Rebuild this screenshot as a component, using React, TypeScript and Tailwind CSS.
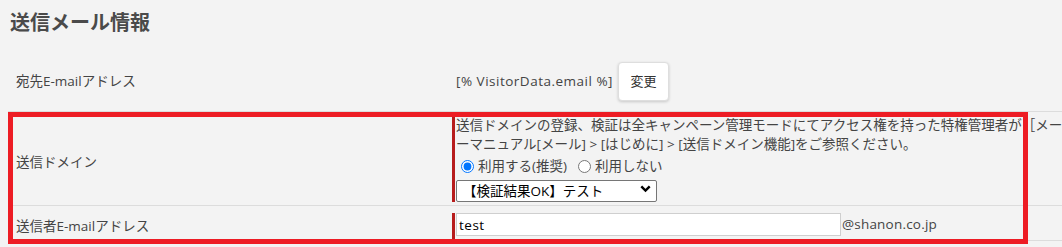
const labelCls = "w-[444px] shrink-0 pl-[8px] text-[13.5px] text-[#444]";

const ValueBar = ({ children }: { children: React.ReactNode }) => (
  <div className="flex-1 self-stretch pt-[7px]">
    <div className="h-full border-l-[3px] border-[#b71c1c] pl-[1px]">{children}</div>
  </div>
);

export default function App() {
  return (
    <div className="relative w-[1062px] h-[247px] overflow-hidden bg-[#f3f3f3] font-['Open_Sans','Noto_Sans_CJK_JP',sans-serif] text-[#444]">
      <h1 className="h-[52px] pl-[10px] pt-[8px] text-[20px] leading-[30px] font-bold text-[#4a4a4a]">
        送信メール情報
      </h1>

      <div className="ml-[8px]">
        {/* 宛先 */}
        <div className="flex h-[60px] items-center border-b border-[#dcdcdc]">
          <div className={labelCls}>宛先E-mailアドレス</div>
          <div className="flex items-center pl-[4px]">
            <span className="text-[13.5px] tracking-[0.5px] text-[#444]">[% VisitorData.email %]</span>
            <button className="ml-[5px] h-[39px] w-[51px] rounded-[4px] border border-[#dedede] bg-white text-[13px] text-[#333] shadow-[0_1px_3px_rgba(0,0,0,0.18)]">
              変更
            </button>
          </div>
        </div>

        {/* 送信ドメイン */}
        <div className="flex h-[94px] border-b border-[#dcdcdc]">
          <div className={labelCls + " flex items-center pt-[7px]"}>送信ドメイン</div>
          <ValueBar>
            <div className="-mt-[3px] text-[13.5px] leading-[19px] text-[#444] whitespace-nowrap">
              <div>送信ドメインの登録、検証は全キャンペーン管理モードにてアクセス権を持った特権管理者が［メールユーザ</div>
              <div>ーマニュアル[メール] &gt; [はじめに] &gt; [送信ドメイン機能]をご参照ください。</div>
            </div>
            <div className="flex h-[20px] items-center mt-[2px] text-[13.5px] text-[#444]">
              <label className="flex items-center">
                <input type="radio" name="domain" defaultChecked className="ml-[5px] mr-[4px] h-[13px] w-[13px]" />
                <span>利用する(推奨)</span>
              </label>
              <label className="ml-[6px] flex items-center">
                <input type="radio" name="domain" className="ml-[5px] mr-[4px] h-[13px] w-[13px]" />
                <span>利用しない</span>
              </label>
            </div>
            <div className="relative mt-[2px] h-[22px] w-[201px]">
              <select className="h-full w-full appearance-none rounded-[2px] border border-[#767676] bg-white pl-[6px] text-[13.5px] text-black">
                <option>【検証結果OK】テスト</option>
              </select>
              <svg className="pointer-events-none absolute right-[6px] top-[7px]" width="11" height="8" viewBox="0 0 11 8">
                <path d="M1.3 1.3 L5.5 5.5 L9.7 1.3" fill="none" stroke="#000" strokeWidth="2.4" />
              </svg>
            </div>
          </ValueBar>
        </div>

        {/* 送信者 */}
        <div className="flex h-[35px] border-b border-[#dcdcdc]">
          <div className={labelCls + " flex items-center pt-[7px]"}>送信者E-mailアドレス</div>
          <ValueBar>
            <div className="flex items-start">
              <input
                defaultValue="test"
                className="h-[23px] w-[385px] border border-[#cfcfcf] bg-white px-[2px] text-[13.5px] tracking-[0.5px] text-black"
              />
              <span className="ml-[1px] leading-[23px] text-[13.5px] tracking-[0.2px] text-[#444]">@shanon.co.jp</span>
            </div>
          </ValueBar>
        </div>
      </div>

      {/* annotation */}
      <div className="pointer-events-none absolute left-[8px] top-[112px] h-[132px] w-[1020px] border-[5px] border-[#ed1c24]" />
    </div>
  );
}
